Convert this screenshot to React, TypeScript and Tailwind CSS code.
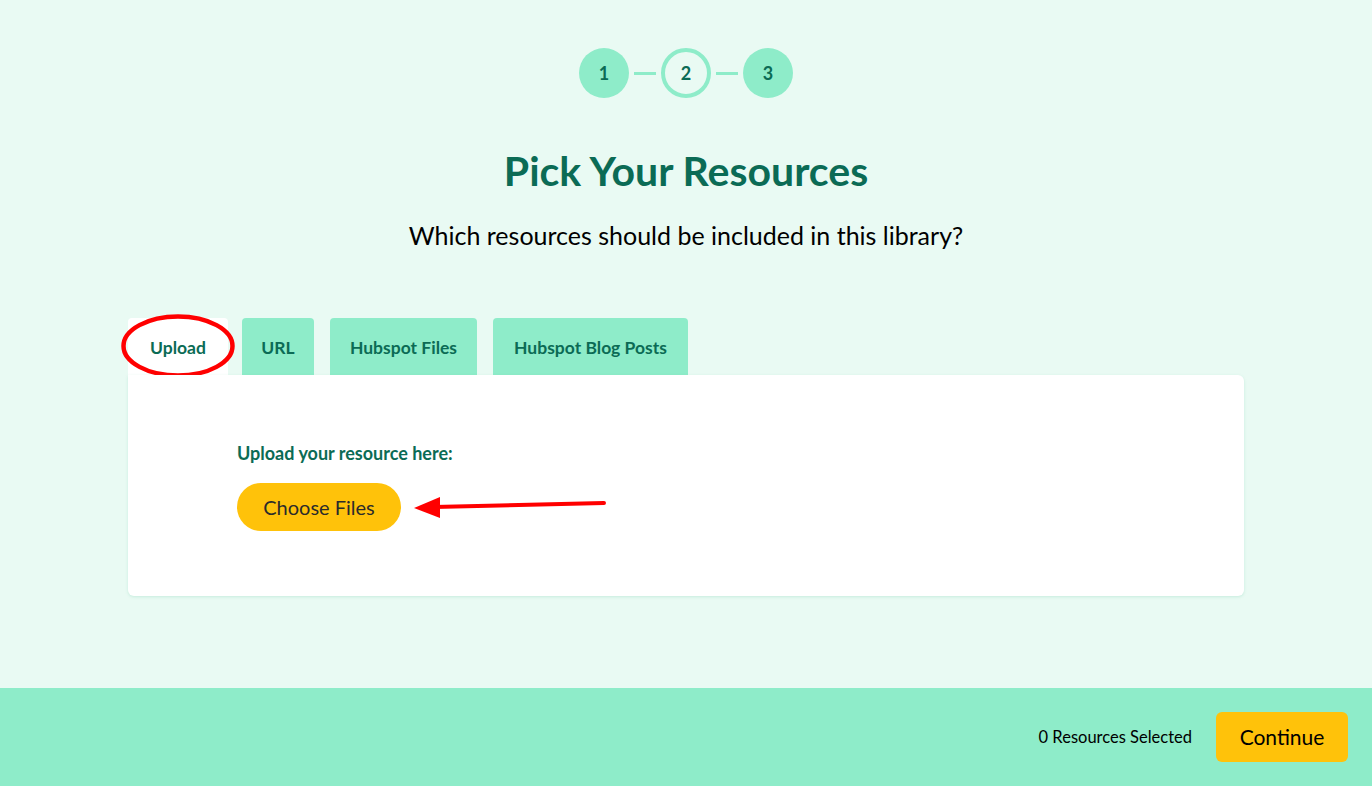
import React from "react";

const font = { fontFamily: '"Lato", "Noto Sans", sans-serif' };

function Step({ n, active }: { n: number; active?: boolean }) {
  return (
    <div
      className={
        "w-[50px] h-[50px] rounded-full flex items-center justify-center text-[18px] font-bold text-[#0b6b55] " +
        (active ? "border-[4px] border-[#8eecc9] bg-[#e9faf3]" : "bg-[#8eecc9]")
      }
    >
      {n}
    </div>
  );
}

export default function App() {
  const tabs = [
    { t: "URL", w: "w-[72px]", ml: "ml-[14px]" },
    { t: "Hubspot Files", w: "w-[147px]", ml: "ml-[16px]" },
    { t: "Hubspot Blog Posts", w: "w-[195px]", ml: "ml-[16px]" },
  ];
  return (
    <div className="w-full h-[786px] flex flex-col bg-[#e9faf3]" style={font}>
      <main className="flex-1 flex flex-col items-center">
        <div className="mt-[48px] flex items-center">
          <Step n={1} />
          <div className="w-[22px] h-[3px] bg-[#8eecc9] mx-[5px]" />
          <Step n={2} active />
          <div className="w-[22px] h-[3px] bg-[#8eecc9] mx-[5px]" />
          <Step n={3} />
        </div>
        <h1 className="mt-[49px] text-[41px] leading-[48px] font-bold text-[#0b6b55]">
          Pick Your Resources
        </h1>
        <p className="mt-[25px] text-[25px] leading-[30px] text-black">
          Which resources should be included in this library?
        </p>
        <div className="mt-[68px] w-[1116px]">
          <div className="relative flex items-end">
            <div className="h-[57px] w-[100px] pt-[3px] bg-white rounded-t-[4px] flex items-center justify-center text-[17.5px] font-bold text-[#0b6b55]">
              Upload
            </div>
            {tabs.map((x) => (
              <div
                key={x.t}
                className={
                  "h-[57px] pt-[3px] bg-[#8eecc9] rounded-t-[4px] flex items-center justify-center text-[17.5px] font-bold text-[#0b6b55] " +
                  x.w +
                  " " +
                  x.ml
                }
              >
                {x.t}
              </div>
            ))}
            <svg
              className="absolute left-[-8px] top-[-4px]"
              width="118"
              height="66"
              viewBox="0 0 118 66"
            >
              <ellipse cx="58" cy="32" rx="54.5" ry="29.5" fill="none" stroke="#ff0000" strokeWidth="4.5" />
            </svg>
          </div>
          <div className="relative bg-white rounded-b-[6px] rounded-tr-[6px] shadow-[0_1px_3px_rgba(100,200,160,0.25)] pl-[109px] pt-[67px] pb-[65px]">
            <div className="text-[18px] leading-[22px] font-bold text-[#0b6b55]">
              Upload your resource here:
            </div>
            <button className="mt-[19px] h-[48px] w-[164px] rounded-full bg-[#ffc20a] text-[20px] text-[#2b2b2b]">
              Choose Files
            </button>
            <svg
              className="absolute left-[284px] top-[118px]"
              width="200"
              height="30"
              viewBox="0 0 200 30"
            >
              <line x1="22" y1="14" x2="192" y2="10" stroke="#ff0000" strokeWidth="4" strokeLinecap="round" />
              <polygon points="2,15 28,4 28,25" fill="#ff0000" />
            </svg>
          </div>
        </div>
      </main>
      <footer className="h-[98px] bg-[#8eecc9] flex items-center justify-end pr-[24px] gap-[24px]">
        <span className="text-[16.5px] text-black">0 Resources Selected</span>
        <button className="h-[50px] w-[132px] rounded-[6px] bg-[#ffc20a] text-[21px] text-black">
          Continue
        </button>
      </footer>
    </div>
  );
}
